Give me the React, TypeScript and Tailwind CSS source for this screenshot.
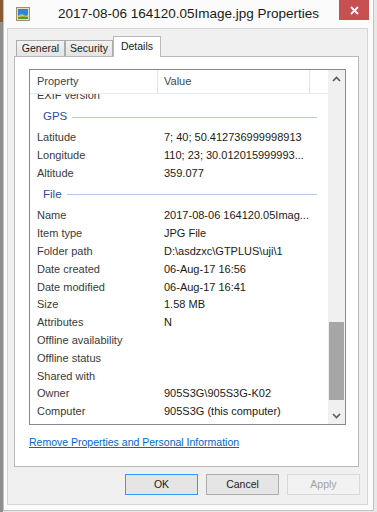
import React from 'react'

type Prop = { label: string; value?: string }

const gpsRows: Prop[] = [
  { label: 'Latitude', value: '7; 40; 50.412736999998913' },
  { label: 'Longitude', value: '110; 23; 30.012015999993...' },
  { label: 'Altitude', value: '359.077' },
]

const fileRows: Prop[] = [
  { label: 'Name', value: '2017-08-06 164120.05Imag...' },
  { label: 'Item type', value: 'JPG File' },
  { label: 'Folder path', value: 'D:\\asdzxc\\GTPLUS\\uji\\1' },
  { label: 'Date created', value: '06-Aug-17 16:56' },
  { label: 'Date modified', value: '06-Aug-17 16:41' },
  { label: 'Size', value: '1.58 MB' },
  { label: 'Attributes', value: 'N' },
  { label: 'Offline availability' },
  { label: 'Offline status' },
  { label: 'Shared with' },
  { label: 'Owner', value: '905S3G\\905S3G-K02' },
  { label: 'Computer', value: '905S3G (this computer)' },
]

function Chevron({ up }: { up?: boolean }) {
  return (
    <svg width="9" height="6" viewBox="0 0 9 6">
      <path
        d={up ? 'M1 5 L4.5 1.5 L8 5' : 'M1 1 L4.5 4.5 L8 1'}
        fill="none"
        stroke="#5a5a5a"
        strokeWidth="1.6"
      />
    </svg>
  )
}

function PhotoIcon() {
  return (
    <svg width="14" height="14" viewBox="0 0 14 14">
      <rect x="0.5" y="0.5" width="13" height="13" fill="#e4dcc6" stroke="#9c9078" />
      <rect x="2" y="2" width="10" height="10" fill="#2f86d8" />
      <path d="M2 9 Q5 6 8 8 T12 7 V12 H2 Z" fill="#e2c236" />
      <path d="M2 10.5 Q6 9 12 10 V12 H2 Z" fill="#4f9a3a" />
    </svg>
  )
}

function PropRow({ label, value }: Prop) {
  return (
    <div className="h-[17.8px] flex items-center whitespace-nowrap">
      <div className="w-[134px] shrink-0 pl-[7px] text-[#3a3a3a]">{label}</div>
      <div className="text-[#1a1a1a]">{value}</div>
    </div>
  )
}

function GroupHeader({ title }: { title: string }) {
  return (
    <div className="h-[24.5px] flex items-center pl-[13px] pr-[11px] pt-[1px]">
      <span className="text-[#2b4ba3] text-[11.5px]">{title}</span>
      <div className="flex-1 h-px bg-[#b5c8ea] ml-[5px]" />
    </div>
  )
}

function Tab({ label, active, width }: { label: string; active?: boolean; width: string }) {
  if (active) {
    return (
      <div className={`${width} h-[21px] bg-white border border-b-0 border-[#b9b9b9] flex items-center justify-center text-[10.5px] text-[#1a1a1a]`}>
        {label}
      </div>
    )
  }
  return (
    <div className={`${width} h-[16px] mb-px bg-linear-to-b from-[#f2f2f2] to-[#e3e3e3] border border-b-0 border-[#acacac] flex items-center justify-center text-[10.5px] text-[#1a1a1a]`}>
      {label}
    </div>
  )
}

export default function App() {
  return (
    <div className="w-[377px] h-[512px] flex bg-[#e8e8e8] overflow-hidden font-['Liberation_Sans',Arial,sans-serif]">
      {/* desktop edge on the left */}
      <div className="w-[3px] flex flex-col">
        <div className="h-[22px] bg-[#8a5a32]" />
        <div className="flex-1 bg-[#8e8e8e]" />
      </div>

      {/* window */}
      <div className="w-[371px] h-[511px] bg-[#fbfbfb] border-x border-b border-[#c2c2c2] px-[4px] flex flex-col">
        {/* title bar */}
        <div className="h-[28px] flex items-start shrink-0">
          <div className="w-[50px] h-[28px] pl-[8px] flex items-center">
            <PhotoIcon />
          </div>
          <div className="flex-1 h-[28px] flex items-center justify-center text-[13.5px] text-[#1a1a1a] whitespace-nowrap">
            2017-08-06 164120.05Image.jpg Properties
          </div>
          <div className="w-[50px] flex justify-end pr-[-1px]">
            <div className="w-[30px] h-[20px] bg-[#c75050] flex items-center justify-center">
              <svg width="9" height="9" viewBox="0 0 9 9">
                <path d="M1 1 L8 8 M8 1 L1 8" stroke="white" strokeWidth="1.8" />
              </svg>
            </div>
          </div>
        </div>

        {/* client area */}
        <div className="w-[361px] -ml-px h-[477px] bg-[#f0f0f0] border border-[#d4d4d4] flex flex-col">
          {/* tabs */}
          <div className="mt-[7px] ml-[8px] h-[21px] flex items-end -mb-px relative z-10">
            <Tab label="General" width="w-[49px]" />
            <Tab label="Security" width="w-[48px]" />
            <Tab label="Details" width="w-[48px]" active />
          </div>

          {/* tab page */}
          <div className="ml-[6px] w-[345px] h-[411px] bg-white border border-[#b9b9b9] pl-[14px] pt-[12px] text-[11px]">
            <div className="w-[317px] h-[356px] border border-[#828790] flex bg-white">
              <div className="flex-1 flex flex-col min-w-0">
                {/* column header */}
                <div className="h-[24px] shrink-0 flex border-b border-[#e3e9f3] text-[#3c4654]">
                  <div className="w-[127px] pl-[7px] flex items-center">Property</div>
                  <div className="w-px bg-[#e5e5e5]" />
                  <div className="w-[151px] pl-[6px] flex items-center">Value</div>
                  <div className="w-px bg-[#e5e5e5]" />
                </div>
                <div className="flex-1 overflow-hidden">
                  <div className="mt-[-7.5px]">
                    <PropRow label="EXIF version" />
                    <GroupHeader title="GPS" />
                    {gpsRows.map(r => (
                      <PropRow key={r.label} {...r} />
                    ))}
                    <GroupHeader title="File" />
                    {fileRows.map(r => (
                      <PropRow key={r.label} {...r} />
                    ))}
                  </div>
                </div>
              </div>

              {/* scrollbar */}
              <div className="w-[17px] bg-[#f0f0f0] flex flex-col">
                <div className="h-[17px] flex items-center justify-center">
                  <Chevron up />
                </div>
                <div className="flex-1 flex flex-col justify-end pb-[7px]">
                  <div className="h-[78px] mx-px bg-[#a6a6a6]" />
                </div>
                <div className="h-[17px] flex items-center justify-center">
                  <Chevron />
                </div>
              </div>
            </div>

            <div className="mt-[11px] h-[14px] flex items-center">
              <span className="text-[10.5px] text-[#0066cc] underline">Remove Properties and Personal Information</span>
            </div>
          </div>

          {/* buttons */}
          <div className="mt-[7px] flex justify-end gap-[8px] pr-[7px] text-[10.5px]">
            <button className="w-[73px] h-[21px] bg-[#e5e5e5] border border-[#3399ff] text-[#1a1a1a]">OK</button>
            <button className="w-[73px] h-[21px] bg-[#e5e5e5] border border-[#adadad] text-[#1a1a1a]">Cancel</button>
            <button className="w-[73px] h-[21px] bg-[#f2f2f2] border border-[#d9d9d9] text-[#a3a3a3]">Apply</button>
          </div>
        </div>
      </div>
    </div>
  )
}
